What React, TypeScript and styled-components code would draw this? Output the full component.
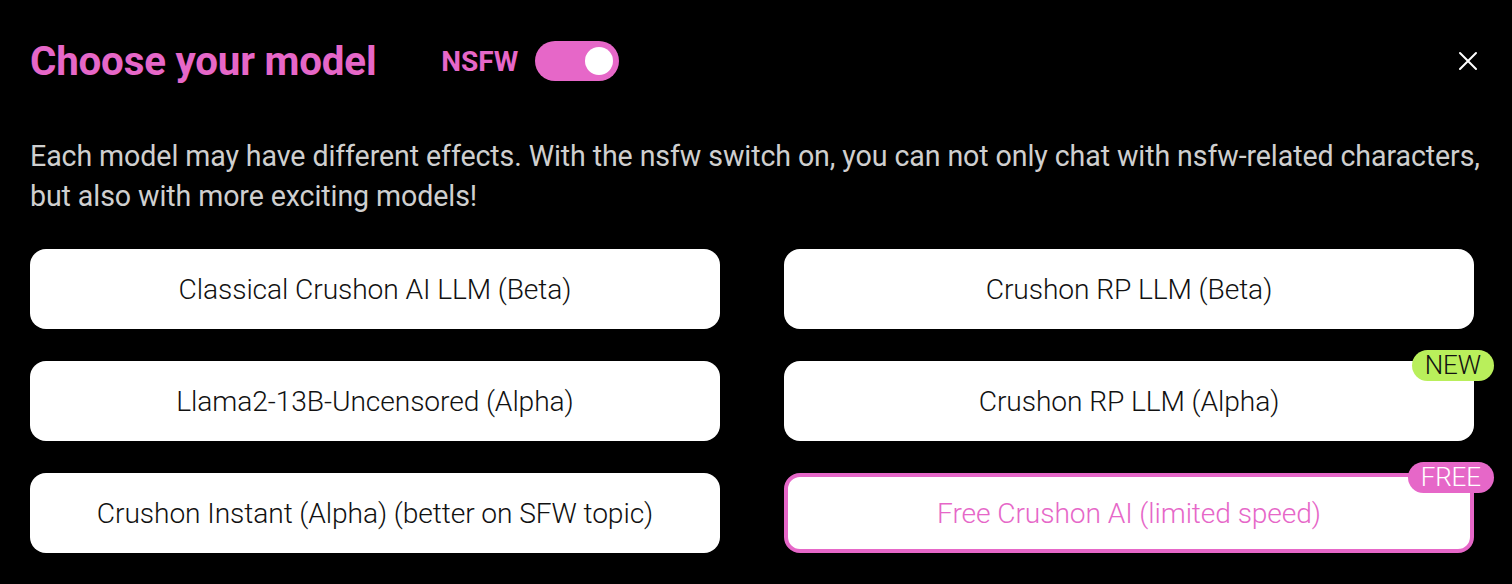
import React from "react";
import styled, { createGlobalStyle } from "styled-components";

const Global = createGlobalStyle`
  html, body { margin: 0; padding: 0; background: #000; }
  body { font-family: Roboto, "Noto Sans", Arial, sans-serif; }
`;

const PINK = "#e667c8";

const Page = styled.div`
  width: 1512px;
  height: 584px;
  box-sizing: border-box;
  background: #000;
  padding: 36px 38px 0 30px;
`;

const Header = styled.div`
  display: flex;
  align-items: center;
  height: 50px;
`;

const Title = styled.h1`
  margin: 0;
  font-size: 40.3px;
  font-weight: 700;
  color: ${PINK};
  letter-spacing: -0.2px;
`;

const NsfwLabel = styled.span`
  margin-left: 65px;
  font-size: 28px;
  font-weight: 700;
  color: ${PINK};
`;

const Toggle = styled.div`
  margin-left: 17px;
  width: 84px;
  height: 40px;
  border-radius: 20px;
  background: ${PINK};
  display: flex;
  align-items: center;
  justify-content: flex-end;
  padding: 0 6px;
  box-sizing: border-box;
`;

const Knob = styled.div`
  width: 28px;
  height: 28px;
  border-radius: 50%;
  background: #fff;
`;

const Close = styled.button`
  margin-left: auto;
  margin-right: -8px;
  background: none;
  border: none;
  padding: 0;
  width: 28px;
  height: 28px;
  display: flex;
  align-items: center;
  justify-content: center;
  cursor: pointer;
`;

const Desc = styled.p`
  margin: 50px 0 0 0;
  font-size: 28.6px;
  line-height: 40px;
  color: #cfcfcf;
  letter-spacing: -0.1px;
  white-space: nowrap;
`;

const Grid = styled.div`
  margin-top: 33px;
  display: grid;
  grid-template-columns: 690px 690px;
  column-gap: 64px;
  row-gap: 32px;
`;

const Option = styled.div<{ $selected?: boolean }>`
  position: relative;
  height: 80px;
  box-sizing: border-box;
  border-radius: 16px;
  background: #fff;
  border: ${(p) => (p.$selected ? `4px solid ${PINK}` : "none")};
  display: flex;
  align-items: center;
  justify-content: center;
  font-size: 28.2px;
  font-weight: 300;
  color: ${(p) => (p.$selected ? PINK : "#111")};
  letter-spacing: -0.1px;
`;

const Badge = styled.span<{ $bg: string; $fg: string; $selected?: boolean }>`
  position: absolute;
  top: ${(p) => (p.$selected ? "-15px" : "-11px")};
  right: ${(p) => (p.$selected ? "-24px" : "-20px")};
  height: 31px;
  padding: 0 13px;
  border-radius: 16px;
  background: ${(p) => p.$bg};
  color: ${(p) => p.$fg};
  font-size: 26px;
  line-height: 31px;
  font-weight: 300;
`;

const options: { label: string; badge?: "NEW" | "FREE"; selected?: boolean }[] = [
  { label: "Classical Crushon AI LLM (Beta)" },
  { label: "Crushon RP LLM (Beta)" },
  { label: "Llama2-13B-Uncensored (Alpha)" },
  { label: "Crushon RP LLM (Alpha)", badge: "NEW" },
  { label: "Crushon Instant (Alpha) (better on SFW topic)" },
  { label: "Free Crushon AI (limited speed)", badge: "FREE", selected: true },
];

export default function App() {
  return (
    <>
      <Global />
      <Page>
        <Header>
          <Title>Choose your model</Title>
          <NsfwLabel>NSFW</NsfwLabel>
          <Toggle>
            <Knob />
          </Toggle>
          <Close aria-label="close">
            <svg width="20" height="20" viewBox="0 0 20 20">
              <path d="M2 2 L18 18 M18 2 L2 18" stroke="#fff" strokeWidth="2" strokeLinecap="round" />
            </svg>
          </Close>
        </Header>
        <Desc>
          Each model may have different effects. With the nsfw switch on, you can not only chat with nsfw-related characters,
          <br />
          but also with more exciting models!
        </Desc>
        <Grid>
          {options.map((o) => (
            <Option key={o.label} $selected={o.selected}>
              {o.label}
              {o.badge === "NEW" && (
                <Badge $bg="#b9ef5b" $fg="#111">NEW</Badge>
              )}
              {o.badge === "FREE" && (
                <Badge $bg={PINK} $fg="#fff" $selected>FREE</Badge>
              )}
            </Option>
          ))}
        </Grid>
      </Page>
    </>
  );
}
